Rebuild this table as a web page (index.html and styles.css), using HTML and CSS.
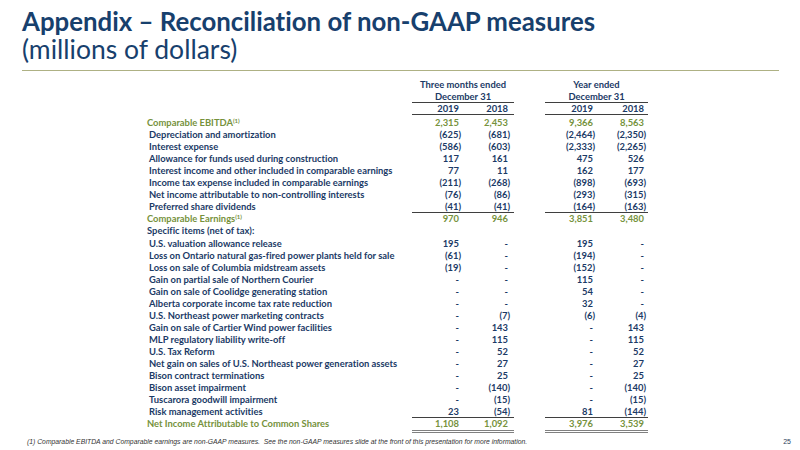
FILE: index.html
```html
<!doctype html>
<html lang="en">

	<head>
		<meta charset="UTF-8" />
		<title>Appendix – Reconciliation of non-GAAP measures</title>
		<link rel="stylesheet" href="styles.css">
	</head>

	<body>
		<section id="slide">
			<header class="head">
				<h1>Appendix – Reconciliation of non-GAAP measures</h1>
				<h2>(millions of dollars)</h2>
			</header>

			<div class="tbl">
				<div class="lbl h"></div>
				<div class="grp grp1 h">Three months ended</div>
				<div class="h"></div>
				<div class="grp grp2 h">Year ended</div>

				<div class="lbl"></div>
				<div class="grp grp1 ul">December 31</div>
				<div></div>
				<div class="grp grp2 ul">December 31</div>

				<div class="lbl"></div>
				<div class="c1 p ul">2019</div>
				<div class="c2 p ul">2018</div>
				<div></div>
				<div class="c3 p ul">2019</div>
				<div class="c4 p ul">2018</div>

				<div class="lbl top green">Comparable EBITDA<sup>(1)</sup></div>
				<div class="c1 p top green">2,315</div>
				<div class="c2 p top green">2,453</div>
				<div class="top"></div>
				<div class="c3 p top green">9,366</div>
				<div class="c4 p top green">8,563</div>

				<div class="lbl in">Depreciation and amortization</div>
				<div class="c1">(625)</div><div class="c2">(681)</div><div></div><div class="c3">(2,464)</div><div class="c4">(2,350)</div>

				<div class="lbl in">Interest expense</div>
				<div class="c1">(586)</div><div class="c2">(603)</div><div></div><div class="c3">(2,333)</div><div class="c4">(2,265)</div>

				<div class="lbl in">Allowance for funds used during construction</div>
				<div class="c1 p">117</div><div class="c2 p">161</div><div></div><div class="c3 p">475</div><div class="c4 p">526</div>

				<div class="lbl in">Interest income and other included in comparable earnings</div>
				<div class="c1 p">77</div><div class="c2 p">11</div><div></div><div class="c3 p">162</div><div class="c4 p">177</div>

				<div class="lbl in">Income tax expense included in comparable earnings</div>
				<div class="c1">(211)</div><div class="c2">(268)</div><div></div><div class="c3">(898)</div><div class="c4">(693)</div>

				<div class="lbl in">Net income attributable to non-controlling interests</div>
				<div class="c1">(76)</div><div class="c2">(86)</div><div></div><div class="c3">(293)</div><div class="c4">(315)</div>

				<div class="lbl in">Preferred share dividends</div>
				<div class="c1 ul">(41)</div><div class="c2 ul">(41)</div><div></div><div class="c3 ul">(164)</div><div class="c4 ul">(163)</div>

				<div class="lbl green">Comparable Earnings<sup>(1)</sup></div>
				<div class="c1 p green">970</div><div class="c2 p green">946</div><div></div><div class="c3 p green">3,851</div><div class="c4 p green">3,480</div>

				<div class="lbl">Specific items (net of tax):</div>
				<div></div><div></div><div></div><div></div><div></div>

				<div class="lbl in top1">U.S. valuation allowance release</div>
				<div class="c1 p top1">195</div><div class="c2 p top1">-</div><div class="top1"></div><div class="c3 p top1">195</div><div class="c4 p top1">-</div>

				<div class="lbl in">Loss on Ontario natural gas-fired power plants held for sale</div>
				<div class="c1">(61)</div><div class="c2 p">-</div><div></div><div class="c3">(194)</div><div class="c4 p">-</div>

				<div class="lbl in">Loss on sale of Columbia midstream assets</div>
				<div class="c1">(19)</div><div class="c2 p">-</div><div></div><div class="c3">(152)</div><div class="c4 p">-</div>

				<div class="lbl in">Gain on partial sale of Northern Courier</div>
				<div class="c1 p">-</div><div class="c2 p">-</div><div></div><div class="c3 p">115</div><div class="c4 p">-</div>

				<div class="lbl in">Gain on sale of Coolidge generating station</div>
				<div class="c1 p">-</div><div class="c2 p">-</div><div></div><div class="c3 p">54</div><div class="c4 p">-</div>

				<div class="lbl in">Alberta corporate income tax rate reduction</div>
				<div class="c1 p">-</div><div class="c2 p">-</div><div></div><div class="c3 p">32</div><div class="c4 p">-</div>

				<div class="lbl in">U.S. Northeast power marketing contracts</div>
				<div class="c1 p">-</div><div class="c2">(7)</div><div></div><div class="c3">(6)</div><div class="c4">(4)</div>

				<div class="lbl in">Gain on sale of Cartier Wind power facilities</div>
				<div class="c1 p">-</div><div class="c2 p">143</div><div></div><div class="c3 p">-</div><div class="c4 p">143</div>

				<div class="lbl in">MLP regulatory liability write-off</div>
				<div class="c1 p">-</div><div class="c2 p">115</div><div></div><div class="c3 p">-</div><div class="c4 p">115</div>

				<div class="lbl in">U.S. Tax Reform</div>
				<div class="c1 p">-</div><div class="c2 p">52</div><div></div><div class="c3 p">-</div><div class="c4 p">52</div>

				<div class="lbl in">Net gain on sales of U.S. Northeast power generation assets</div>
				<div class="c1 p">-</div><div class="c2 p">27</div><div></div><div class="c3 p">-</div><div class="c4 p">27</div>

				<div class="lbl in">Bison contract terminations</div>
				<div class="c1 p">-</div><div class="c2 p">25</div><div></div><div class="c3 p">-</div><div class="c4 p">25</div>

				<div class="lbl in">Bison asset impairment</div>
				<div class="c1 p">-</div><div class="c2">(140)</div><div></div><div class="c3 p">-</div><div class="c4">(140)</div>

				<div class="lbl in">Tuscarora goodwill impairment</div>
				<div class="c1 p">-</div><div class="c2">(15)</div><div></div><div class="c3 p">-</div><div class="c4">(15)</div>

				<div class="lbl in">Risk management activities</div>
				<div class="c1 p ul">23</div><div class="c2 ul">(54)</div><div></div><div class="c3 p ul">81</div><div class="c4 ul">(144)</div>

				<div class="lbl green">Net Income Attributable to Common Shares</div>
				<div class="c1 p green dbl">1,108</div><div class="c2 p green dbl">1,092</div><div></div><div class="c3 p green dbl">3,976</div><div class="c4 p green dbl">3,539</div>
			</div>

			<footer class="foot">
				<p class="note">(1) Comparable EBITDA and Comparable earnings are non-GAAP measures.&nbsp; See the non-GAAP measures slide at the front of this presentation for more information.</p>
				<span class="pg">25</span>
			</footer>
		</section>
	</body>

</html>
```

FILE: styles.css
```css
* {
	margin: 0;
	padding: 0;
	box-sizing: border-box;
}

body {
	background: #fff;
	font-family: "Lato", "Open Sans", sans-serif;
	font-variant-ligatures: none;
	color: #1b3a66;
}

#slide {
	width: 800px;
	height: 450px;
	overflow: hidden;
}

.head {
	margin: 0 21px 0 22px;
	padding-top: 7px;
	height: 71px;
	border-bottom: 1px solid #aeb184;
}

.head h1 {
	font-size: 25.8px;
	font-weight: 700;
	line-height: 28px;
	color: #17406d;
}

.head h2 {
	font-size: 26.5px;
	font-weight: 400;
	line-height: 28px;
	color: #17406d;
}

/* table */
.tbl {
	margin: 7px 0 0 147px;
	display: grid;
	grid-template-columns: 265px 51px 51px 31px 51px 52px;
	font-size: 9.4px;
	font-weight: 700;
	line-height: 12px;
	width: 501px;
}

.tbl > div {
	white-space: nowrap;
	min-height: 12px;
}

.tbl > div.h {
	line-height: 13px;
	min-height: 13px;
}

.grp1 {
	grid-column: 2 / span 2;
	text-align: center;
}

.grp2 {
	grid-column: 5 / span 2;
	text-align: center;
}

.lbl.in {
	padding-left: 2px;
}

.c1, .c2, .c3, .c4 {
	text-align: right;
}

.c1 { padding-right: 2px; }
.c2 { padding-right: 4px; }
.c3 { padding-right: 1px; }
.c4 { padding-right: 2px; }

.c1.p { padding-right: 4px; }
.c2.p { padding-right: 6px; }
.c3.p { padding-right: 3px; }
.c4.p { padding-right: 4px; }

.ul {
	box-shadow: inset 0 -1px 0 #3f3f3f;
}

.tbl > .top {
	padding-top: 2px;
}

.tbl > .top1 {
	padding-top: 1px;
}

.green {
	color: #76923c;
}

sup {
	font-size: 6px;
	line-height: 0;
	vertical-align: 3px;
}

.dbl {
	border-bottom: 3px double #808080;
}

/* footer */
.foot {
	display: flex;
	justify-content: space-between;
	align-items: center;
	margin: 5px 0 0 27px;
	padding-right: 9px;
	line-height: 8px;
}

.note {
	font-family: "Liberation Sans", Arial, sans-serif;
	font-style: italic;
	font-size: 6.8px;
	color: #333;
}

.pg {
	font-family: "Liberation Sans", Arial, sans-serif;
	font-size: 7px;
	color: #2b3f5c;
}
```
